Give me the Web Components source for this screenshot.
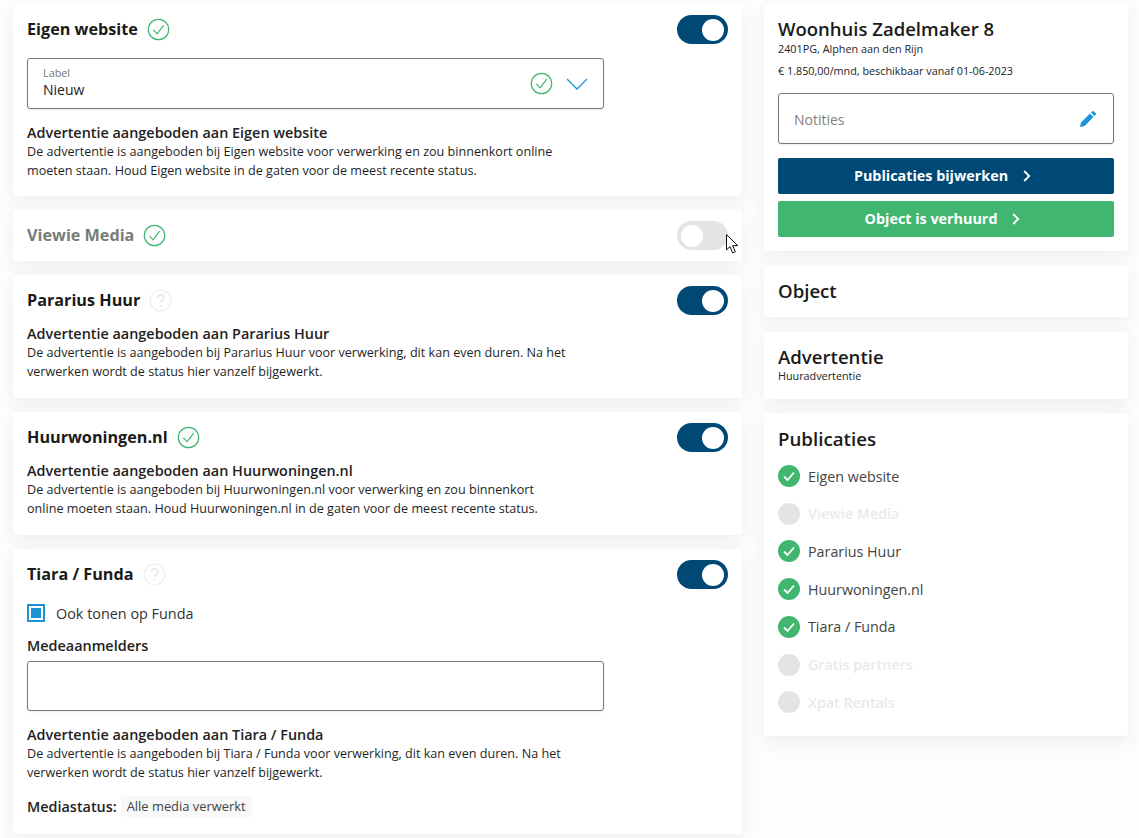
<!DOCTYPE html>
<html lang="nl">
<head>
<meta charset="utf-8">
<title>Publicaties</title>
<style>
  html, body { margin: 0; padding: 0; }
  body {
    background: #fdfdfd;
    color: #1a1a1a;
    font-family: "Open Sans", "Liberation Sans", sans-serif;
    font-size: 12px;
    width: 1139px;
    height: 838px;
    overflow: hidden;
  }
</style>
</head>
<body>
<publish-page>
  <publish-card slot="left" title="Eigen website" status="ok" on>
    <select-field label="Label" value="Nieuw"></select-field>
    <offer-note name="Eigen website" end>De advertentie is aangeboden bij Eigen website voor verwerking en zou binnenkort online<br>moeten staan. Houd Eigen website in de gaten voor de meest recente status.</offer-note>
  </publish-card>
  <publish-card slot="left" title="Viewie Media" status="ok" muted></publish-card>
  <publish-card slot="left" title="Pararius Huur" status="unknown" on>
    <offer-note name="Pararius Huur" tight>De advertentie is aangeboden bij Pararius Huur voor verwerking, dit kan even duren. Na het<br>verwerken wordt de status hier vanzelf bijgewerkt.</offer-note>
  </publish-card>
  <publish-card slot="left" title="Huurwoningen.nl" status="ok" on>
    <offer-note name="Huurwoningen.nl" tight>De advertentie is aangeboden bij Huurwoningen.nl voor verwerking en zou binnenkort<br>online moeten staan. Houd Huurwoningen.nl in de gaten voor de meest recente status.</offer-note>
  </publish-card>
  <publish-card slot="left" title="Tiara / Funda" status="unknown" on>
    <check-row>Ook tonen op Funda</check-row>
    <text-box label="Medeaanmelders"></text-box>
    <offer-note name="Tiara / Funda">De advertentie is aangeboden bij Tiara / Funda voor verwerking, dit kan even duren. Na het<br>verwerken wordt de status hier vanzelf bijgewerkt.</offer-note>
    <media-status value="Alle media verwerkt"></media-status>
  </publish-card>

  <object-summary slot="right"></object-summary>
  <side-card slot="right" heading="Object" style="margin-top:15px"></side-card>
  <side-card slot="right" heading="Advertentie" sub="Huuradvertentie" style="margin-top:15px"></side-card>
  <publication-list slot="right" style="margin-top:14px"></publication-list>
</publish-page>

<script>
const CHECK_RING = `
  <svg width="23" height="23" viewBox="0 0 23 23" fill="none" aria-hidden="true">
    <circle cx="11.5" cy="11.5" r="10.2" stroke="#41b670" stroke-width="1.2"/>
    <path d="M6.4 11.8l3.7 4 6.6-8.6" stroke="#41b670" stroke-width="1.2"/>
  </svg>`;

const CARD_SHADOW = '0 6px 18px rgba(50, 60, 100, .08)';

const define = (name, css, render) => {
  customElements.define(name, class extends HTMLElement {
    connectedCallback() {
      if (this.shadowRoot) return;
      this.attachShadow({ mode: 'open' });
      this.shadowRoot.innerHTML = `<style>${css}</style>${render(this)}`;
    }
  });
};

define('publish-page', `
  :host { display: grid; grid-template-columns: 729px 364px; column-gap: 22px; padding: 4px 0 0 13px; align-items: start; }
  .col { display: flex; flex-direction: column; }
  .left { gap: 14px; }
  .cursor { position: absolute; left: 726px; top: 234px; }
`, () => `
  <div class="col left"><slot name="left"></slot></div>
  <div class="col"><slot name="right"></slot></div>
  <svg class="cursor" width="13" height="20" viewBox="0 0 13 20">
    <path d="M.5.7v15.2l3.5-3.3 2.6 6.3 2.7-1.1-2.6-6.2h5L.5.7z" fill="#fff" stroke="#111" stroke-width="1"/>
  </svg>
`);

define('status-icon', `
  :host { display: inline-flex; width: 23px; height: 23px; }
`, (el) => el.getAttribute('kind') === 'ok' ? CHECK_RING : `
  <svg width="23" height="23" viewBox="0 0 23 23" fill="none" aria-hidden="true">
    <circle cx="11.5" cy="11.5" r="10.4" stroke="#efefef" stroke-width="1.2"/>
    <path d="M8.2 9c.2-2 1.6-3 3.4-3 1.9 0 3.3 1.1 3.3 2.8 0 2.5-3.3 2.6-3.3 5" stroke="#ececec" stroke-width="2"/>
    <circle cx="11.6" cy="17" r="1.3" fill="#ececec"/>
  </svg>`);

define('toggle-switch', `
  :host { display: block; width: 51px; height: 29px; border-radius: 15px; background: #e4e4e4; position: relative; flex: none; }
  :host([on]) { background: #004977; }
  i { position: absolute; top: 3.5px; left: 4px; width: 22px; height: 22px; border-radius: 50%; background: #fff; }
  :host([on]) i { left: 25px; }
`, () => `<i></i>`);

define('publish-card', `
  :host { display: block; background: #fff; border-radius: 3px; padding: 11px 14px; box-shadow: ${CARD_SHADOW}; }
  header { display: flex; align-items: center; height: 29px; }
  h2 { margin: 0 9px 0 0; font-size: 16.2px; line-height: 29px; font-weight: 700; color: #1a1a1a; }
  :host([muted]) h2 { color: #777c78; }
  toggle-switch { margin-left: auto; }
`, (el) => `
  <header>
    <h2>${el.getAttribute('title')}</h2>
    <status-icon kind="${el.getAttribute('status')}"></status-icon>
    <toggle-switch ${el.hasAttribute('on') ? 'on' : ''}></toggle-switch>
  </header>
  <div class="body"><slot></slot></div>
`);

define('select-field', `
  :host { display: flex; align-items: center; box-sizing: border-box; width: 577px; height: 51px; margin-top: 14px; padding: 0 15px 1px; border: 1px solid #777; border-radius: 3px; box-shadow: 0 1px 2px rgba(0,0,0,.08); }
  .txt { flex: 1; }
  small { display: block; font-size: 10.8px; line-height: 12px; color: #777; }
  span { display: block; margin-top: 1px; font-size: 14px; line-height: 19px; color: #222; }
  status-icon { margin-top: 1px; }
  svg.chev { margin: 1px 0 0 13px; }
`, (el) => `
  <div class="txt"><small>${el.getAttribute('label')}</small><span>${el.getAttribute('value')}</span></div>
  <status-icon kind="ok"></status-icon>
  <svg class="chev" width="22" height="12" viewBox="0 0 22 12" fill="none"><path d="M1 1l10 10L21 1" stroke="#1b93d6" stroke-width="1.3"/></svg>
`);

define('offer-note', `
  :host { display: block; margin-top: 14px; }
  :host([tight]) { margin: 9px 0 6px; }
  :host([end]) { margin-bottom: 5px; }
  h3 { margin: 0; font-size: 14.4px; line-height: 19px; font-weight: 600; color: #222; }
  p { margin: 0; font-size: 12.6px; line-height: 18.5px; color: #1f1f1f; padding-top: 1px; }
`, (el) => `
  <h3>Advertentie aangeboden aan ${el.getAttribute('name')}</h3>
  <p><slot></slot></p>
`);

define('check-row', `
  :host { display: flex; align-items: center; margin-top: 14px; height: 20px; font-size: 14.4px; color: #333; }
  .box { box-sizing: border-box; width: 18px; height: 18px; margin-right: 11px; border: 2px solid #1b93d6; padding: 2px; }
  .box i { display: block; width: 100%; height: 100%; background: #1b93d6; }
`, () => `<span class="box"><i></i></span><slot></slot>`);

define('text-box', `
  :host { display: block; margin-top: 13px; }
  label { display: block; font-size: 14.4px; line-height: 20px; font-weight: 600; color: #222; }
  div { box-sizing: border-box; width: 577px; height: 50px; margin-top: 5px; border: 1px solid #777; border-radius: 3px; box-shadow: 0 1px 2px rgba(0,0,0,.08); }
`, (el) => `<label>${el.getAttribute('label')}</label><div></div>`);

define('media-status', `
  :host { display: flex; align-items: center; margin: 14px 0 6px; height: 21px; font-size: 12.9px; }
  b { font-weight: 600; color: #222; font-size: 14.4px; margin-right: 4px; }
  span { background: #f7f8f7; border-radius: 3px; padding: 0 6px; line-height: 21px; color: #444; }
`, (el) => `<b>Mediastatus:</b><span>${el.getAttribute('value')}</span>`);

const SIDE_BOX = `:host { display: block; background: #fff; border-radius: 3px; padding: 14px; box-shadow: ${CARD_SHADOW}; }`;

define('side-card', SIDE_BOX + `
  :host { padding: 11px 14px 13px; }
  h2 { margin: 0; font-size: 18.6px; line-height: 27px; font-weight: 600; color: #1a1a1a; }
  p { margin: 0 0 4px; font-size: 10.8px; line-height: 12px; color: #222; }
`, (el) => `
  <h2>${el.getAttribute('heading')}</h2>
  ${el.getAttribute('sub') ? `<p>${el.getAttribute('sub')}</p>` : ''}
`);

define('action-button', `
  :host { display: flex; align-items: center; justify-content: center; box-sizing: border-box; height: 36px; margin-top: 7px; padding: 0 7px 1px 0; border-radius: 2px; color: #fff; font-size: 14.35px; font-weight: 700; background: #004977; }
  :host([green]) { background: #41b670; }
  svg { margin-left: 15px; }
`, () => `<slot></slot><svg width="8" height="12" viewBox="0 0 8 12" fill="none"><path d="M1.2 1l5 5-5 5" stroke="#fff" stroke-width="1.8"/></svg>`);

define('object-summary', SIDE_BOX + `
  :host { padding: 11px 14px 14px; }
  h2 { margin: 0; font-size: 18.5px; line-height: 27px; font-weight: 600; color: #1a1a1a; }
  p { margin: 0; font-size: 10.8px; line-height: 13px; color: #222; }
  p + p { margin-top: 9px; }
  .notes { display: flex; align-items: center; justify-content: space-between; box-sizing: border-box; height: 51px; margin: 16px 0 14px; padding: 1px 17px 0 15px; border: 1px solid #777; border-radius: 3px; font-size: 14px; color: #808080; box-shadow: 0 1px 2px rgba(0,0,0,.08); }
`, () => `
  <h2>Woonhuis Zadelmaker 8</h2>
  <p>2401PG, Alphen aan den Rijn</p>
  <p>€ 1.850,00/mnd, beschikbaar vanaf 01-06-2023</p>
  <div class="notes">Notities
    <svg width="16" height="16" viewBox="0 0 16 16"><path fill="#1b93d6" d="M0 16l1-4.5L10 2.5 13.5 6l-9 9zM11 1.5l1-1a1.4 1.4 0 0 1 2 0l1.5 1.5a1.4 1.4 0 0 1 0 2l-1 1z"/></svg>
  </div>
  <action-button>Publicaties bijwerken</action-button>
  <action-button green>Object is verhuurd</action-button>
`);

define('publication-item', `
  :host { display: flex; align-items: center; height: 23px; font-size: 14.3px; color: #444; }
  :host([off]) { color: #eaeaea; font-weight: 600; }
  span { margin-left: 8px; }
  i { width: 22px; height: 22px; border-radius: 50%; background: #e4e4e4; flex: none; }
`, (el) => `
  ${el.hasAttribute('off') ? '<i></i>' : `<svg width="22" height="22" viewBox="0 0 22 22" fill="none"><circle cx="11" cy="11" r="11" fill="#41b670"/><path d="M6 11.5l3.5 3.5 6.5-7.5" stroke="#fff" stroke-width="1.8"/></svg>`}
  <span><slot></slot></span>
`);

define('publication-list', SIDE_BOX + `
  :host { padding: 12px 14px 22px; }
  h2 { margin: 0 0 12.6px; font-size: 18.7px; line-height: 27px; font-weight: 600; color: #1a1a1a; }
  ul { display: flex; flex-direction: column; gap: 14.7px; margin: 0; padding: 0; }
`, () => `
  <h2>Publicaties</h2>
  <ul>
    <publication-item>Eigen website</publication-item>
    <publication-item off>Viewie Media</publication-item>
    <publication-item>Pararius Huur</publication-item>
    <publication-item>Huurwoningen.nl</publication-item>
    <publication-item>Tiara / Funda</publication-item>
    <publication-item off>Gratis partners</publication-item>
    <publication-item off>Xpat Rentals</publication-item>
  </ul>
`);
</script>
</body>
</html>
